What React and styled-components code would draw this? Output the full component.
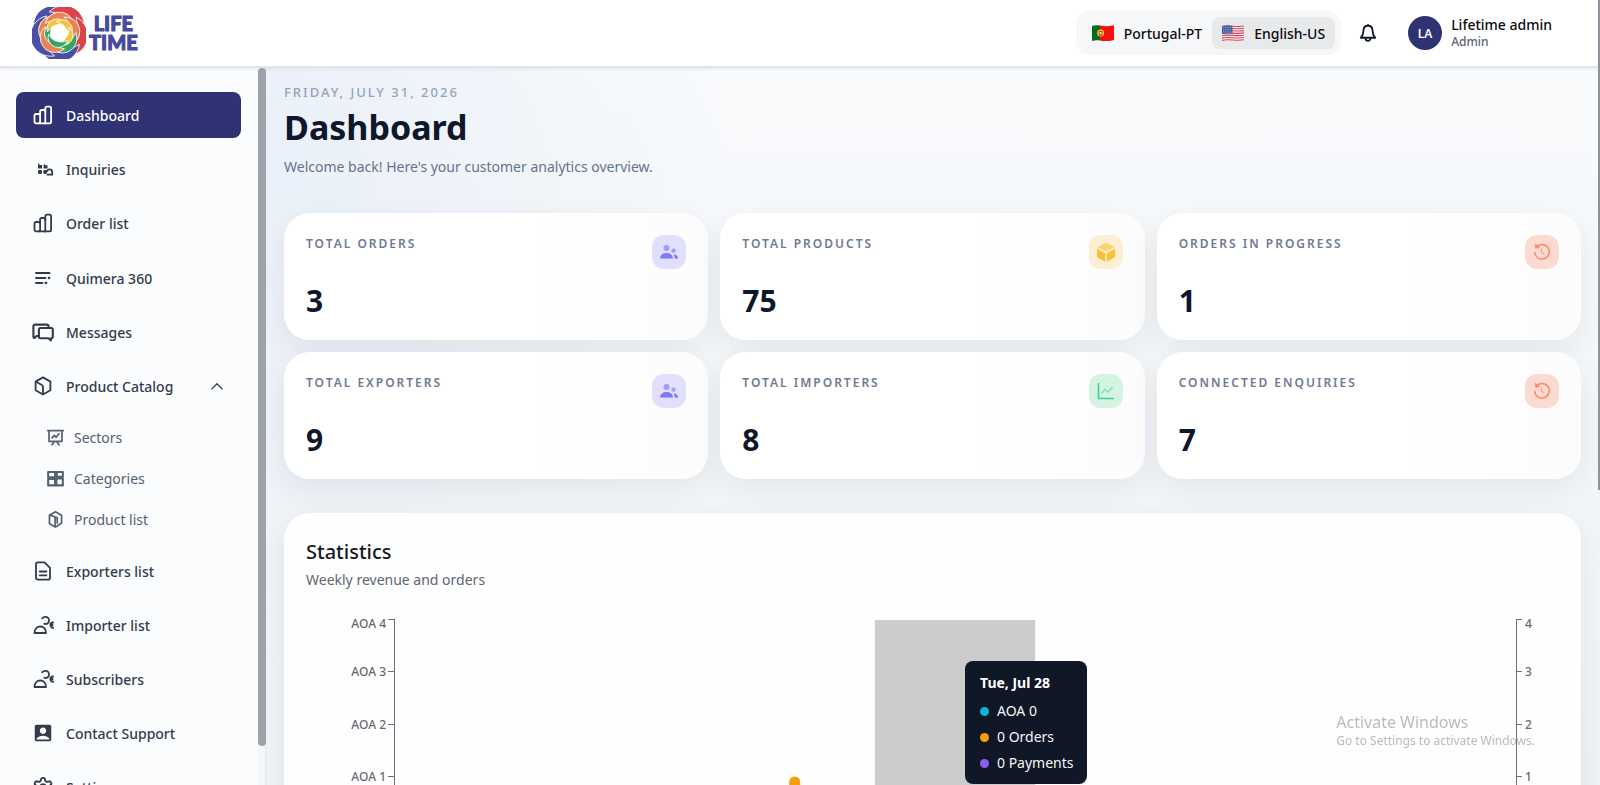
import React from 'react'
import styled, { createGlobalStyle } from 'styled-components'
import { MdAccountBox } from 'react-icons/md'
import { LuSettings } from 'react-icons/lu'

const GlobalStyle = createGlobalStyle`
    * {
        box-sizing: border-box;
    }
    body {
        margin: 0;
        font-family: "Noto Sans", "Open Sans", sans-serif;
        font-size: 14px;
        color: #0f172a;
        overflow: hidden;
    }
    button {
        font: inherit;
        color: inherit;
        border: 0;
        padding: 0;
        background: none;
        cursor: pointer;
    }
    h1, h2, p, ul {
        margin: 0;
        padding: 0;
    }
    ul {
        list-style: none;
    }
`

const Page = styled.div`
    height: 100vh;
    display: grid;
    grid-template-rows: 68px 1fr;
    position: relative;
    overflow: hidden;
`

const PageThumb = styled.div`
    position: absolute;
    top: 0;
    right: 0;
    width: 2px;
    height: 490px;
    background: #8d929f;
    z-index: 5;
`

/* top bar */

const TopBar = styled.header`
    display: flex;
    align-items: center;
    justify-content: space-between;
    padding: 0 48px 0 32px;
    background: #fff;
    border-bottom: 2px solid #e2e5e9;
    box-shadow: 0 1px 3px rgba(15, 23, 42, 0.08);
    z-index: 2;
`

const Logo = styled.a`
    display: flex;
    align-items: center;
    gap: 3px;
    text-decoration: none;
`

const LogoText = styled.span`
    display: grid;
    justify-items: center;
    font-family: Lato, sans-serif;
    font-weight: 900;
    font-size: 20px;
    line-height: 19px;
    color: #464a9e;
    -webkit-text-stroke: 1px #464a9e;
`

const TopRight = styled.div`
    display: flex;
    align-items: center;
`

const LangSwitch = styled.div`
    display: flex;
    padding: 6px;
    border-radius: 14px;
    background: #f6f7f8;
`

const LangButton = styled.button`
    display: flex;
    align-items: center;
    gap: 10px;
    height: 32px;
    padding: 0 10px;
    border-radius: 8px;
    font-weight: 500;
    color: #0b0b0f;
    background: ${props => (props.$active ? '#e8e9ea' : 'transparent')};
`

const BellButton = styled.button`
    display: flex;
    margin: 0 30px 0 17px;
`

const Profile = styled.button`
    display: flex;
    align-items: center;
    gap: 9px;
    text-align: left;
`

const Avatar = styled.span`
    width: 34px;
    height: 34px;
    border-radius: 50%;
    display: grid;
    place-items: center;
    background: #2f3273;
    color: #fff;
    font-size: 12px;
    font-weight: 600;
`

const ProfileName = styled.span`
    display: block;
    font-weight: 500;
    line-height: 18px;
    color: #0b0b0f;
`

const ProfileRole = styled.span`
    display: block;
    font-size: 12px;
    line-height: 16px;
    font-weight: 500;
    color: #5b6472;
`

/* side bar */

const Body = styled.div`
    display: grid;
    grid-template-columns: 266px 1fr;
    min-height: 0;
`

const SideBar = styled.aside`
    display: grid;
    grid-template-columns: 1fr 8px;
    background: #fafcfe;
    overflow: hidden;
`

const SideNav = styled.nav`
    padding: 24px 17px 24px 16px;
    display: flex;
    flex-direction: column;
    gap: 9px;
    min-height: 0;
`

const NavList = styled.ul`
    display: flex;
    flex-direction: column;
    gap: 8px;
`

const NavLink = styled.a`
    display: flex;
    align-items: center;
    gap: 12px;
    height: 46px;
    padding: 0 16px;
    border-radius: 8px;
    font-weight: 500;
    text-decoration: none;
    color: ${props => (props.$active ? '#fff' : '#333b4a')};
    background: ${props => (props.$active ? '#2f3273' : 'transparent')};

    svg:last-child {
        margin-left: auto;
    }
    svg:first-child {
        margin-left: 0;
    }
`

const SubList = styled.ul`
    padding-top: 8px;
`

const SubLink = styled.a`
    display: flex;
    align-items: center;
    gap: 9px;
    height: 41px;
    padding-left: 30px;
    text-decoration: none;
    color: #56606e;
`

const ScrollTrack = styled.div`
    background: #f6f7f8;
    border-right: 1px solid #e8eaee;
`

const ScrollThumb = styled.div`
    width: 8px;
    height: calc(100% - 39px);
    border-radius: 4px;
    background: #9ca3ac;
`

/* content */

const Content = styled.main`
    padding: 16px 19px 0 18px;
    overflow: hidden;
    background:
        radial-gradient(ellipse 460px 520px at 0 12%, rgba(214, 226, 246, 0.4), transparent),
        linear-gradient(180deg, #f8fafc, #eff3f6);
`

const Today = styled.p`
    font-size: 13px;
    line-height: 16px;
    font-weight: 500;
    letter-spacing: 2px;
    text-transform: uppercase;
    color: #94a3b8;
    margin-bottom: 4px;
`

const Title = styled.h1`
    font-size: 34px;
    line-height: 46px;
    font-weight: 700;
    color: #0f172a;
    margin-bottom: 5px;
`

const Welcome = styled.p`
    line-height: 24px;
    color: #64748b;
    margin-bottom: 34px;
`

const CardGrid = styled.section`
    display: grid;
    grid-template-columns: repeat(3, 1fr);
    gap: 12px;
    margin-bottom: 34px;
`

const Card = styled.article`
    padding: 22px;
    border-radius: 26px;
    background: linear-gradient(90deg, #fff 60%, #fcfcfd);
    box-shadow: 0 10px 30px rgba(15, 23, 42, 0.07);
`

const CardHead = styled.div`
    display: flex;
    justify-content: space-between;
    align-items: flex-start;
    height: 34px;
    margin-bottom: 14px;
`

const CardLabel = styled.h2`
    font-size: 12px;
    line-height: 18px;
    font-weight: 600;
    letter-spacing: 2px;
    text-transform: uppercase;
    color: #6f7a92;
`

const CardIcon = styled.span`
    width: 34px;
    height: 34px;
    border-radius: 12px;
    display: grid;
    place-items: center;
    background: ${props => props.$bg};
`

const CardValue = styled.p`
    font-size: 30px;
    line-height: 35px;
    font-weight: 700;
`

const StatsCard = styled.section`
    padding: 22px;
    border-radius: 26px;
    background: #fefefe;
    box-shadow: 0 10px 30px rgba(15, 23, 42, 0.07);
`

const StatsTitle = styled.h2`
    font-size: 20px;
    line-height: 33px;
    font-weight: 500;
    color: #16181d;
`

const StatsText = styled.p`
    line-height: 24px;
    color: #5f6672;
    margin-bottom: 23px;
`

const ChartRow = styled.div`
    display: grid;
    grid-template-columns: 88px 1fr 43px;
    height: 260px;
`

const AxisSvg = styled.svg`
    display: block;
    overflow: visible;

    text {
        font-size: 12px;
        font-weight: 500;
        fill: #666b73;
    }
    path {
        stroke: #6b6f76;
        fill: none;
    }
`

const Plot = styled.div`
    position: relative;

    > svg {
        display: block;
    }
`

const Tooltip = styled.div`
    position: absolute;
    left: calc(50% + 10px);
    top: 46px;
    padding: 11px 13px 8px 15px;
    border-radius: 8px;
    background: #101726;
    color: #fff;
    white-space: nowrap;
`

const TooltipTitle = styled.p`
    font-weight: 700;
    line-height: 22px;
    margin-bottom: 4px;
`

const TooltipItem = styled.li`
    display: flex;
    align-items: center;
    gap: 8px;
    line-height: 26px;
    color: #f4f5f7;

    &::before {
        content: "";
        width: 9px;
        height: 9px;
        border-radius: 50%;
        background: ${props => props.$color};
    }
`

const Watermark = styled.aside`
    position: fixed;
    right: 65px;
    bottom: 36px;
    color: #b9bbbd;
    font-size: 12px;
    line-height: 16px;
    pointer-events: none;
`

const WatermarkTitle = styled.p`
    font-size: 16px;
    line-height: 22px;
`

/* icons */

const Line = ({ size = 22, width = 1.8, children }) => (
    <svg
        width={size}
        height={size}
        viewBox="0 0 22 22"
        fill="none"
        stroke="currentColor"
        strokeWidth={width}
        strokeLinecap="round"
        strokeLinejoin="round"
        aria-hidden="true"
    >
        {children}
    </svg>
)

const BarsIcon = () => (
    <Line>
        <rect x="2.5" y="10" width="5.6" height="9.4" rx="1.6" />
        <path d="M8.1 11V7.6c0-1 .6-1.600 1.600-1.600h2c1 0 1.600.6 1.600 1.600v11.800H7" />
        <path d="M13.300 8V4.200c0-1 .6-1.600 1.600-1.600h2.600c1 0 1.600.6 1.600 1.600v13.600c0 1-.6 1.600-1.600 1.600h-5" />
    </Line>
)

const InquiryIcon = () => (
    <Line>
        <g fill="currentColor" stroke="none">
            <path d="M6 5l1.800 2H10v3.500H6z" />
            <rect x="6" y="12" width="4" height="4" rx="1.2" />
            <path d="M12 6l1.800 1.200h1.700v3.300h-3.900V8z" />
            <rect x="11.4" y="12" width="3.6" height="4" rx="1.2" />
        </g>
        <path d="M15.500 16.700h4.700v-2.500c0-1.700-1-2.900-2.500-2.900s-2.300.8-2.500 1.700" />
    </Line>
)

const LinesIcon = () => (
    <Line>
        <path d="M4 6h13.500M4 11h9.500M4 16h6.500" />
        <path d="M16.800 11h.5M13.600 16h.6" strokeWidth="2.3" />
    </Line>
)

const MessagesIcon = () => (
    <Line width={2.1}>
        <path d="M5.800 15H4.500L2.600 17c-.8 0-1.200-.6-1.200-1.200V5.300c0-1 .7-1.700 1.700-1.700h11.700c1 0 1.700.7 1.700 1.700v1" />
        <path d="M8.500 7h10.700c1 0 1.600.6 1.600 1.600v7c0 1-.6 1.600-1.600 1.600h-.2v2.300l-2.600-2.300H8.500c-1 0-1.600-.6-1.600-1.600v-7C6.900 7.600 7.500 7 8.500 7z" />
    </Line>
)

const CubeIcon = () => (
    <Line>
        <path d="M11 2.400l7.400 4.200v8.600L11 19.500l-7.400-4.300V6.600z" />
        <path d="M4 6.800l6 3.200c.6.300 1 .9 1 1.600v7.600" />
    </Line>
)

const ChevronUp = () => (
    <Line size={16}>
        <path d="M4 15l7-7 7 7" />
    </Line>
)

const BoardIcon = () => (
    <Line size={19} width={2}>
        <path d="M2 3h18M3.500 3v12.500h15V3M7 19.500l2.500-3.500M15 19.500l-2.500-3.500" />
        <path d="M7 11.500l2.700-3 2 2.200L15 6.700" />
    </Line>
)

const BlocksIcon = () => (
    <Line size={19} width={2.4}>
        <path d="M2.500 3.500h8v6h-8zM2.500 11.500h8v7.500h-8zM12.500 3.500h7v5.500h-7zM12 11h7.500v8H12z" />
        <path d="M10 9.500l2.500 2" />
    </Line>
)

const BoxIcon = () => (
    <Line size={19} width={2}>
        <path d="M11 2l7 4v9l-7 4.800L4 16V6z" />
        <path d="M4.500 6l5 1.500c.6.200 1 .6 1 1.300v10M10 8l3 1v6" />
    </Line>
)

const DocIcon = () => (
    <Line>
        <path d="M5.500 2.300h7l5.500 5.500v10c0 1.200-.7 1.900-1.900 1.900H5.900c-1.200 0-1.900-.7-1.900-1.900V4.200c0-1.200.7-1.900 1.900-1.900z" />
        <path d="M7.800 11.500h6.600M7.800 15.300h6.600" />
    </Line>
)

const PeopleIcon = () => (
    <Line>
        <path d="M2.500 19h11.500c0-4-2.300-6.500-5.700-6.500S2.500 15 2.500 19z" />
        <path d="M10.200 4.400c1.500-1.900 4.500-2.100 6-.4 1.500 1.700 1 4.500-1 5.600-1 .5-2 .5-2.900.1" />
        <path d="M21 8.500c-1.600.2-2.500 1.100-2.500 2.400 0 1.400.9 2.300 2.500 2.900M18.500 11h2" strokeWidth="2" />
    </Line>
)

const UsersDuo = () => (
    <svg width="20" height="20" viewBox="0 0 20 20" fill="#7d78f5" aria-hidden="true">
        <circle cx="7.5" cy="6" r="3" opacity=".65" />
        <circle cx="14.5" cy="8.6" r="2.2" opacity=".65" />
        <path d="M1 16.500c.3-3.600 3-5.500 6.500-5.500s6.200 1.900 6.500 5.500z" />
        <path d="M14.500 12.300c2.700.2 4.400 1.700 4.700 4.200h-3.500c0-1.700-.5-3-1.200-4.200z" />
    </svg>
)

const CubeDuo = () => (
    <svg width="20" height="20" viewBox="0 0 20 20" fill="#f8c136" aria-hidden="true">
        <path d="M10 .5l8.600 4.700L10 9.600 1.400 5.200z" opacity=".6" />
        <path d="M1 6.800l8.300 4.400v8.600L1 15.300z" />
        <path d="M19 6.800l-8.300 4.400v8.600l8.300-4.500z" />
    </svg>
)

const ChartDuo = () => (
    <svg width="20" height="20" viewBox="0 0 20 20" fill="none" stroke="#3fcf8e" aria-hidden="true">
        <path d="M2.500 2v15.500H18" strokeWidth="1.6" />
        <path d="M5.500 12.500l3.500-4 3 2.500 4.500-5" strokeWidth="1.3" opacity=".6" />
    </svg>
)

const HistoryDuo = () => (
    <svg width="20" height="20" viewBox="0 0 20 20" fill="none" stroke="#fb8a66" strokeWidth="1.5" aria-hidden="true">
        <path d="M4 5.600A7.300 7.300 0 1 1 2.700 10" />
        <path d="M3.200 2l.3 4.200 4.200-.6z" fill="#fb8a66" strokeWidth=".6" />
        <path d="M9.500 6.500v4l2.800 1.300" opacity=".7" strokeWidth="1.2" />
    </svg>
)

const BellIcon = () => (
    <Line size={20} width={2}>
        <path d="M11 3c-3.400 0-5 2.500-5 5.500 0 4-1.200 6-2.800 7.700h15.600C17.200 14.500 16 12.500 16 8.500 16 5.500 14.400 3 11 3zM11 1.800V3M8.200 16.500c0 4.200 5.600 4.200 5.600 0" />
    </Line>
)

const PortugalFlag = () => (
    <svg width="22" height="16" viewBox="0 0 22 16" aria-hidden="true">
        <path d="M0 1c3-1 5-1 8-.4v15C5 15 3 15 0 16z" fill="#0a6b1c" />
        <path d="M8 .6c5 1 9 1 14-.4v14.800c-5 1.400-9 1.600-14 .6z" fill="#fb0f0c" />
        <circle cx="8.6" cy="8" r="3.5" fill="#f3d328" />
        <path d="M6.700 6h3.800v3c0 2.500-3.800 2.500-3.800 0z" fill="#d8322c" />
        <path d="M7.800 7h1.600v2.200H7.800z" fill="#fff" />
    </svg>
)

const UsFlag = () => (
    <svg width="22" height="16" viewBox="0 0 22 16" aria-hidden="true">
        <path d="M0 1c7-2 14 1 22-.6v14.600c-8 1.600-15-1-22 1z" fill="#f5eef0" />
        {[0, 1, 2, 3, 4, 5, 6].map(i => (
            <path
                key={i}
                d={`M0 ${1.6 + i * 2.3}c7-2 14 1 22-.6`}
                stroke="#d8475a"
                strokeWidth="1.1"
                fill="none"
            />
        ))}
        <path d="M0 1c4-1 7-.7 10.500-.2v8C7 8.300 4 8.300 0 9.200z" fill="#43629c" />
        {[2.6, 4.8, 7].map(y => (
            <path key={y} d={`M1 ${y}h9`} stroke="#c9d4e8" strokeWidth=".7" strokeDasharray=".8 1" />
        ))}
    </svg>
)

// one petal of the logo wheel, tapered at both ends
const petal = 'M-24 3A20.500 20.500 0 0 1 13-17.500C-1-22-17-15-24 3z'

const LogoRing = ({ scale, turn, colors }) =>
    colors.map((color, i) => (
        <path
            key={i}
            d={petal}
            fill={color}
            stroke="#fff"
            strokeWidth={0.8 / scale}
            strokeLinejoin="round"
            transform={`rotate(${turn + (i * 360) / colors.length}) scale(${scale})`}
        />
    ))

const LogoMark = () => (
    <svg width="54" height="52" viewBox="-28 -27 56 54" aria-hidden="true">
        <circle r="20" fill="#4a50a4" />
        <path d="M0-20A20 20 0 0 1 0 20z" fill="#d8434e" />
        <LogoRing scale={1} turn={0} colors={['#4a50a4', '#d8434e', '#d8434e', '#4a50a4', '#4a50a4']} />
        <circle r="17" fill="#fff" />
        <LogoRing scale={0.72} turn={-30} colors={['#ec8352', '#ec8352', '#ec8352', '#35a467', '#ec8352']} />
        <circle r="12" fill="#fff" />
        <LogoRing scale={0.5} turn={-60} colors={['#35a467', '#f2c53d', '#f2c53d', '#f2c53d', '#35a467']} />
    </svg>
)

const mainLinks = [
    { label: 'Dashboard', icon: <BarsIcon />, active: true },
    { label: 'Inquiries', icon: <InquiryIcon /> },
    { label: 'Order list', icon: <BarsIcon /> },
]

const catalogLinks = [
    { label: 'Quimera 360', icon: <LinesIcon /> },
    { label: 'Messages', icon: <MessagesIcon /> },
    {
        label: 'Product Catalog',
        icon: <CubeIcon />,
        children: [
            { label: 'Sectors', icon: <BoardIcon /> },
            { label: 'Categories', icon: <BlocksIcon /> },
            { label: 'Product list', icon: <BoxIcon /> },
        ],
    },
    { label: 'Exporters list', icon: <DocIcon /> },
    { label: 'Importer list', icon: <PeopleIcon /> },
    { label: 'Subscribers', icon: <PeopleIcon /> },
    { label: 'Contact Support', icon: <MdAccountBox size={22} /> },
    { label: 'Settings', icon: <LuSettings size={22} /> },
]

const cards = [
    { label: 'Total orders', value: 3, icon: <UsersDuo />, bg: '#e1dffc' },
    { label: 'Total products', value: 75, icon: <CubeDuo />, bg: '#fdefd3' },
    { label: 'Orders in progress', value: 1, icon: <HistoryDuo />, bg: '#fbdad1' },
    { label: 'Total exporters', value: 9, icon: <UsersDuo />, bg: '#e1dffc' },
    { label: 'Total importers', value: 8, icon: <ChartDuo />, bg: '#d3f3e3' },
    { label: 'Connected enquiries', value: 7, icon: <HistoryDuo />, bg: '#fbdad1' },
]

// y of each axis tick inside the chart, and y of its label
const ticks = [
    { value: 4, y: 4.5, labelY: 13 },
    { value: 3, y: 56.5, labelY: 61 },
    { value: 2, y: 109.5, labelY: 114 },
    { value: 1, y: 161.5, labelY: 166 },
    { value: 0, y: 213.5, labelY: 218 },
]

const tooltipRows = [
    { text: 'AOA 0', color: '#06b6d4' },
    { text: '0 Orders', color: '#f59e0b' },
    { text: '0 Payments', color: '#8b5cf6' },
]

const Nav = ({ links }) => (
    <NavList>
        {links.map(link => (
            <li key={link.label}>
                <NavLink href="#" $active={link.active}>
                    {link.icon}
                    {link.label}
                    {link.children && <ChevronUp />}
                </NavLink>
                {link.children && (
                    <SubList>
                        {link.children.map(sub => (
                            <li key={sub.label}>
                                <SubLink href="#">
                                    {sub.icon}
                                    {sub.label}
                                </SubLink>
                            </li>
                        ))}
                    </SubList>
                )}
            </li>
        ))}
    </NavList>
)

const StatisticsChart = () => (
    <ChartRow>
        <AxisSvg width="88" height="260">
            <path d="M88.500 4v210" />
            {ticks.map(tick => (
                <React.Fragment key={tick.value}>
                    <path d={`M82 ${tick.y}h6`} />
                    <text x="80" y={tick.labelY} textAnchor="end">AOA {tick.value}</text>
                </React.Fragment>
            ))}
        </AxisSvg>
        <Plot>
            <svg width="100%" height="214">
                <rect x={`${(3 / 7) * 100}%`} y="5" width={`${100 / 7}%`} height="209" fill="#ccc" />
                <svg x={`${(2.5 / 7) * 100}%`} overflow="visible">
                    <path d="M-5.500 214v-47a5.500 5.500 0 0 1 11 0v47z" fill="#f59e0b" />
                </svg>
            </svg>
            <Tooltip role="tooltip">
                <TooltipTitle>Tue, Jul 28</TooltipTitle>
                <ul>
                    {tooltipRows.map(row => (
                        <TooltipItem key={row.text} $color={row.color}>{row.text}</TooltipItem>
                    ))}
                </ul>
            </Tooltip>
        </Plot>
        <AxisSvg width="43" height="260">
            <path d="M.5 4v210" />
            {ticks.map(tick => (
                <React.Fragment key={tick.value}>
                    <path d={`M0 ${tick.y}h6`} />
                    <text x="9" y={tick.labelY}>{tick.value}</text>
                </React.Fragment>
            ))}
        </AxisSvg>
    </ChartRow>
)

const App = () => (
    <>
        <GlobalStyle />
        <Page>
            <TopBar>
                <Logo href="#" aria-label="Lifetime">
                    <LogoMark />
                    <LogoText>
                        <span>LIFE</span>
                        <span>TIME</span>
                    </LogoText>
                </Logo>
                <TopRight>
                    <LangSwitch>
                        <LangButton><PortugalFlag />Portugal-PT</LangButton>
                        <LangButton $active><UsFlag />English-US</LangButton>
                    </LangSwitch>
                    <BellButton aria-label="Notifications"><BellIcon /></BellButton>
                    <Profile>
                        <Avatar>LA</Avatar>
                        <span>
                            <ProfileName>Lifetime admin</ProfileName>
                            <ProfileRole>Admin</ProfileRole>
                        </span>
                    </Profile>
                </TopRight>
            </TopBar>
            <Body>
                <SideBar>
                    <SideNav>
                        <Nav links={mainLinks} />
                        <Nav links={catalogLinks} />
                    </SideNav>
                    <ScrollTrack><ScrollThumb /></ScrollTrack>
                </SideBar>
                <Content>
                    <Today>Friday, July 31, 2026</Today>
                    <Title>Dashboard</Title>
                    <Welcome>Welcome back! Here's your customer analytics overview.</Welcome>
                    <CardGrid>
                        {cards.map(card => (
                            <Card key={card.label}>
                                <CardHead>
                                    <CardLabel>{card.label}</CardLabel>
                                    <CardIcon $bg={card.bg}>{card.icon}</CardIcon>
                                </CardHead>
                                <CardValue>{card.value}</CardValue>
                            </Card>
                        ))}
                    </CardGrid>
                    <StatsCard>
                        <StatsTitle>Statistics</StatsTitle>
                        <StatsText>Weekly revenue and orders</StatsText>
                        <StatisticsChart />
                    </StatsCard>
                </Content>
            </Body>
            <PageThumb />
            <Watermark>
                <WatermarkTitle>Activate Windows</WatermarkTitle>
                <p>Go to Settings to activate Windows.</p>
            </Watermark>
        </Page>
    </>
)

export default App
